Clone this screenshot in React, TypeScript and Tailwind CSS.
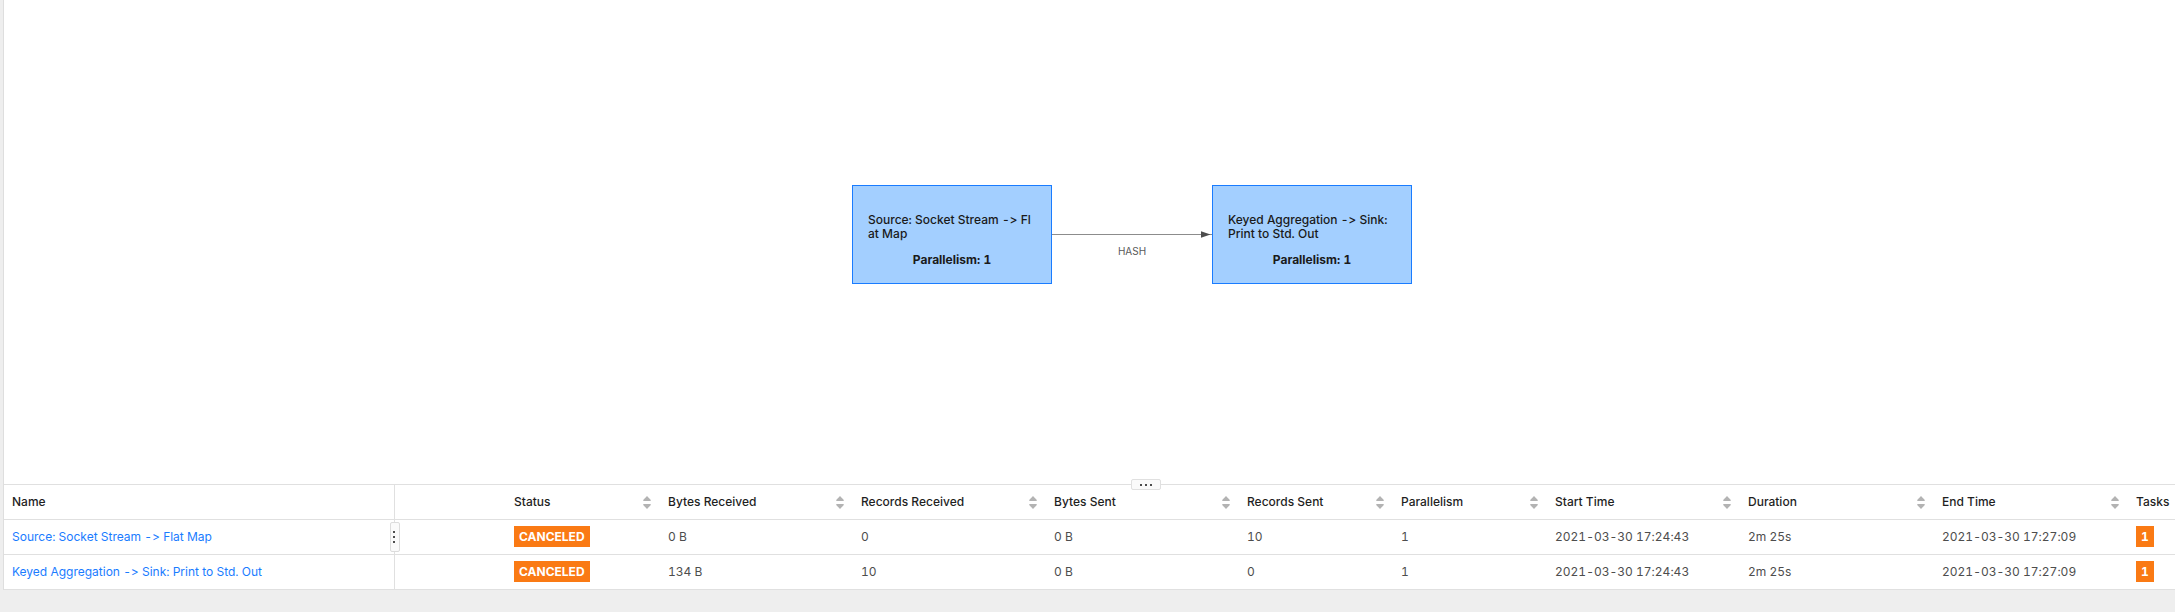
import React from 'react';

type Vertex = {
  name: string;
  bytesReceived: string;
  recordsReceived: string;
  bytesSent: string;
  recordsSent: string;
  parallelism: string;
  startTime: string;
  duration: string;
  endTime: string;
  tasks: string;
};

const vertices: Vertex[] = [
  {
    name: 'Source: Socket Stream -> Flat Map',
    bytesReceived: '0 B',
    recordsReceived: '0',
    bytesSent: '0 B',
    recordsSent: '10',
    parallelism: '1',
    startTime: '2021-03-30 17:24:43',
    duration: '2m 25s',
    endTime: '2021-03-30 17:27:09',
    tasks: '1',
  },
  {
    name: 'Keyed Aggregation -> Sink: Print to Std. Out',
    bytesReceived: '134 B',
    recordsReceived: '10',
    bytesSent: '0 B',
    recordsSent: '0',
    parallelism: '1',
    startTime: '2021-03-30 17:24:43',
    duration: '2m 25s',
    endTime: '2021-03-30 17:27:09',
    tasks: '1',
  },
];

const columns = [
  { title: 'Status', width: 'w-[154px]' },
  { title: 'Bytes Received', width: 'w-[193px]' },
  { title: 'Records Received', width: 'w-[193px]' },
  { title: 'Bytes Sent', width: 'w-[193px]' },
  { title: 'Records Sent', width: 'w-[154px]' },
  { title: 'Parallelism', width: 'w-[154px]' },
  { title: 'Start Time', width: 'w-[193px]' },
  { title: 'Duration', width: 'w-[194px]' },
  { title: 'End Time', width: 'w-[194px]' },
];

function SortIcon() {
  return (
    <svg width="8" height="13" viewBox="0 0 8 13" fill="#b3b3b3" aria-hidden="true">
      <path d="M4 0 7.8 4.1Q8 5 7.2 5H.8Q0 5 .2 4.1Z" />
      <path d="M4 13 7.8 8.9Q8 8 7.2 8H.8Q0 8 .2 8.9Z" />
    </svg>
  );
}

function Dots() {
  return (
    <>
      <span className="size-[2px] shrink-0 bg-[#4d4d4d]" />
      <span className="size-[2px] shrink-0 bg-[#4d4d4d]" />
      <span className="size-[2px] shrink-0 bg-[#4d4d4d]" />
    </>
  );
}

function GraphNode({ lines, parallelism }: { lines: string[]; parallelism: number }) {
  return (
    <div className="h-[99px] w-[200px] border border-[#1a7cff] bg-[#a3cfff] px-[15px] pt-[27px] text-[#1a1a1a]">
      <div className="whitespace-nowrap font-medium leading-[14px]">
        {lines.map((line) => (
          <div key={line}>{line}</div>
        ))}
      </div>
      <div className="mt-3 text-center font-bold leading-[14px]">Parallelism: {parallelism}</div>
    </div>
  );
}

function Tag({ children }: { children: React.ReactNode }) {
  return (
    <span className="mb-px block h-[21px] w-fit bg-[#fa7a14] px-[5px] font-bold leading-[21px] text-white">
      {children}
    </span>
  );
}

export default function App() {
  return (
    <div className="min-h-screen overflow-hidden bg-[#eeeeee] pl-[3px] font-['Inter',sans-serif] text-[12px] text-[#4d4d4d] [font-feature-settings:'tnum','calt'_0]">
      <main className="border-l border-[#dedede] bg-white">
        <section className="flex h-[484px] justify-center pl-[85px] pt-[185px]">
          <div className="flex items-start">
            <GraphNode lines={['Source: Socket Stream -> Fl', 'at Map']} parallelism={1} />
            <div className="w-[160px] pt-11 text-center text-[10px] leading-[12px] text-[#595959]">
              <svg className="block" width="160" height="10" viewBox="0 0 160 10" aria-hidden="true">
                <path d="M0 5.5H160" stroke="#8c8c8c" strokeWidth="1" />
                <path d="M149 2.3 158.5 5.5 149 8.7Z" fill="#4d4d4d" />
              </svg>
              <div className="mt-[6px]">HASH</div>
            </div>
            <GraphNode lines={['Keyed Aggregation -> Sink:', 'Print to Std. Out']} parallelism={1} />
          </div>
        </section>

        <section className="relative border-t border-[#e0e0e0]">
          <div className="absolute inset-x-0 -top-[6px] flex justify-center pl-[113px]">
            <button
              type="button"
              aria-label="Resize graph"
              className="flex h-[11px] w-[30px] items-center justify-center gap-[3px] rounded-[2px] border border-[#e0e0e0] bg-[#fafafa]"
            >
              <Dots />
            </button>
          </div>
          <table className="w-full table-fixed border-separate border-spacing-0 text-left">
            <colgroup>
              <col className="w-[391px]" />
              <col className="w-[111px]" />
              {columns.map((c) => (
                <col key={c.title} className={c.width} />
              ))}
              <col className="w-[47px]" />
            </colgroup>
            <thead>
              <tr className="h-[35px] text-[#1f1f1f] *:border-b *:border-[#e0e0e0] *:font-medium">
                <th className="border-r px-2">Name</th>
                <th aria-label="Spacer" />
                {columns.map((c) => (
                  <th key={c.title} className="pl-2 pr-[9px]">
                    <button type="button" className="flex w-full items-center justify-between font-medium">
                      {c.title}
                      <SortIcon />
                    </button>
                  </th>
                ))}
                <th className="pl-2">Tasks</th>
              </tr>
            </thead>
            <tbody>
              {vertices.map((v, i) => (
                <tr key={v.name} className="h-[35px] *:border-b *:border-[#e0e0e0] *:whitespace-nowrap">
                  <td className="relative border-r px-2">
                    <a href="#vertex" className="text-[#1a7cff]">
                      {v.name}
                    </a>
                    {i === 0 && (
                      <button
                        type="button"
                        aria-label="Resize name column"
                        className="absolute -right-[6px] top-[2px] flex h-[30px] w-[10px] flex-col items-center justify-center gap-[3px] rounded-[2px] border border-[#dcdcdc] bg-[#fafafa] pr-[2px]"
                      >
                        <Dots />
                      </button>
                    )}
                  </td>
                  <td />
                  <td className="pl-2">
                    <Tag>CANCELED</Tag>
                  </td>
                  <td className="pl-2">{v.bytesReceived}</td>
                  <td className="pl-2">{v.recordsReceived}</td>
                  <td className="pl-2">{v.bytesSent}</td>
                  <td className="pl-2">{v.recordsSent}</td>
                  <td className="pl-2">{v.parallelism}</td>
                  <td className="pl-2">{v.startTime}</td>
                  <td className="pl-2">{v.duration}</td>
                  <td className="pl-2">{v.endTime}</td>
                  <td className="pl-2">
                    <Tag>{v.tasks}</Tag>
                  </td>
                </tr>
              ))}
            </tbody>
          </table>
        </section>
      </main>
    </div>
  );
}
